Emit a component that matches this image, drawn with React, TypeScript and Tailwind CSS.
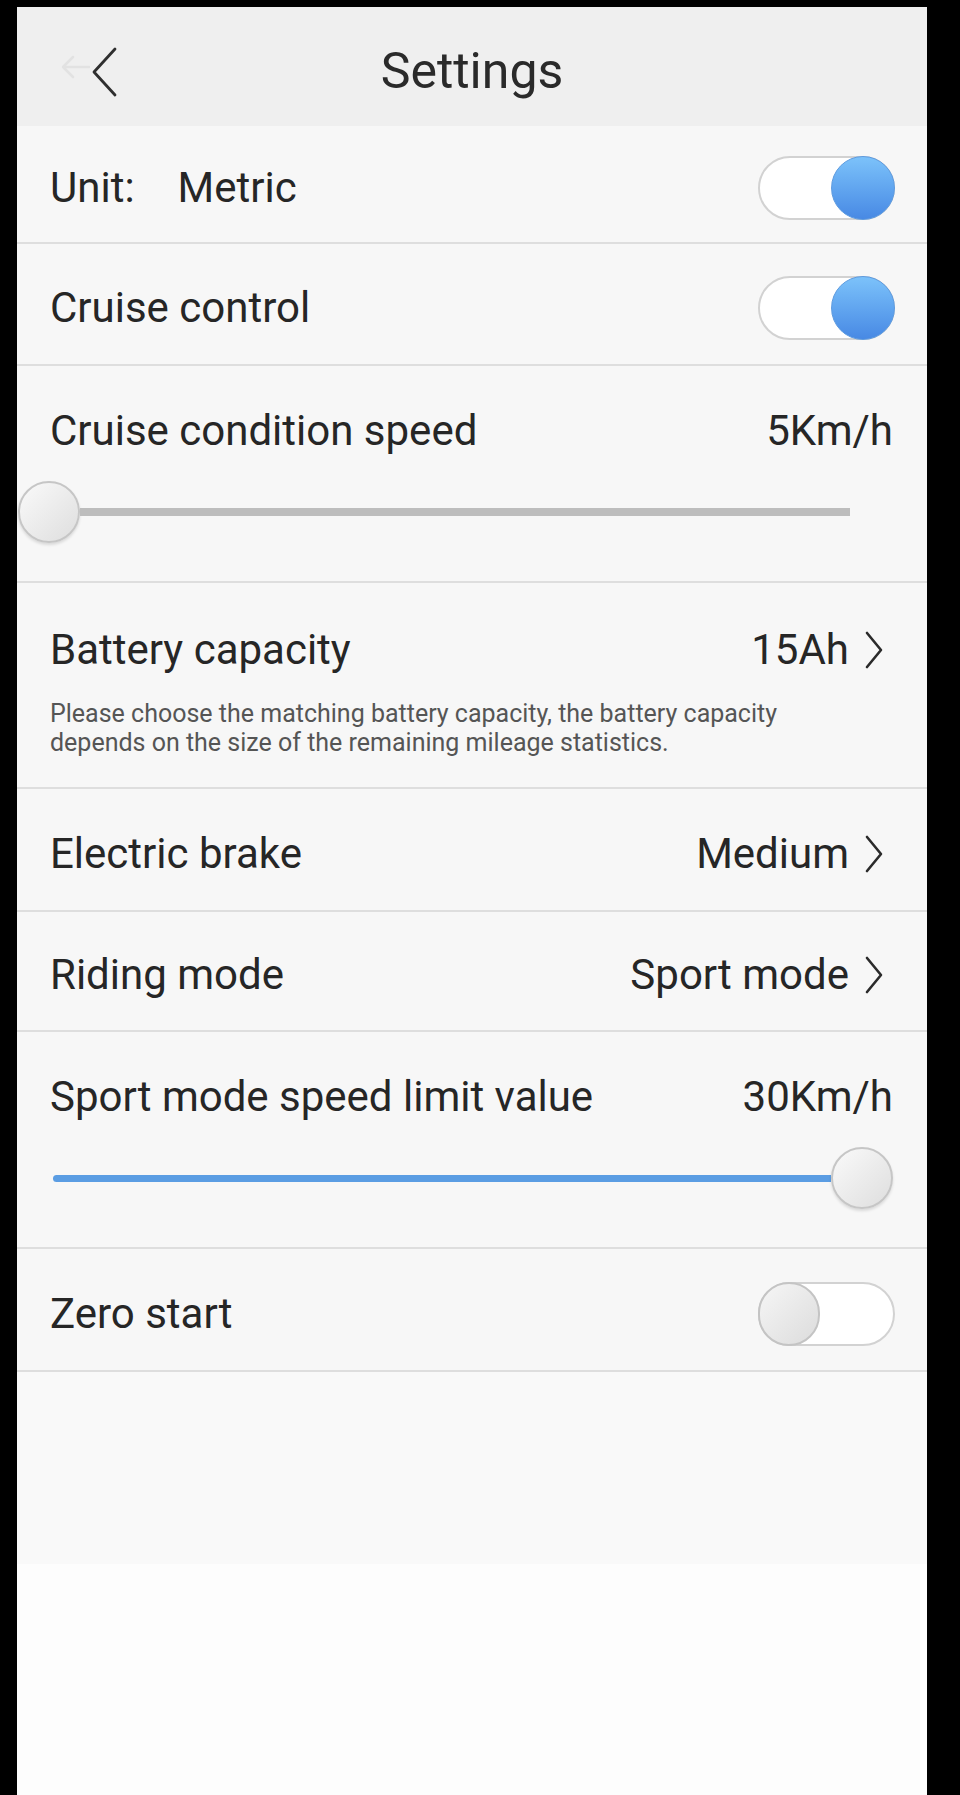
import React from 'react';

const font = { fontFamily: 'Roboto, "Noto Sans", sans-serif' };

function Toggle({ on }: { on: boolean }) {
  return (
    <div className="relative w-[137px] h-[64px] rounded-full border-2 border-[#d2d2d2] bg-white">
      {on ? (
        <div className="absolute right-[-2px] top-[-2px] w-[64px] h-[64px] rounded-full bg-gradient-to-b from-[#7cc2fa] to-[#4889e4] border border-[#5d9be0]" />
      ) : (
        <div className="absolute left-[-2px] top-[-2px] w-[62px] h-[64px] rounded-full bg-gradient-to-br from-[#f6f6f6] to-[#dcdcdc] border-2 border-[#c4c4c4]" />
      )}
    </div>
  );
}

function Chevron() {
  return (
    <svg width="22" height="38" viewBox="0 0 22 38" className="shrink-0">
      <path d="M4 2 L18 19 L4 36" fill="none" stroke="#2b2b2b" strokeWidth="2.6" strokeLinecap="round" strokeLinejoin="round" />
    </svg>
  );
}

function Knob() {
  return (
    <div className="w-[62px] h-[62px] shrink-0 rounded-full bg-gradient-to-br from-[#fafafa] to-[#dedede] border-2 border-[#c6c6c6] shadow-[0_2px_3px_rgba(0,0,0,0.12)]" />
  );
}

function SimpleRow({ label, value, toggle, height }: { label: React.ReactNode; value?: string; toggle?: boolean; height: string }) {
  return (
    <div className={`flex items-center justify-between pl-[33px] pr-[32px] pt-[8px] border-b-2 border-[#dedede] ${height}`}>
      <div className="text-[42px] text-[#262626] leading-[48px]">{label}</div>
      {toggle !== undefined ? (
        <Toggle on={toggle} />
      ) : (
        <div className="flex items-center gap-[14px] pr-[10px]">
          <span className="text-[42px] text-[#262626] leading-[48px]">{value}</span>
          <Chevron />
        </div>
      )}
    </div>
  );
}

export default function App() {
  return (
    <div className="min-h-[1795px] w-[960px] bg-black pt-[7px] pl-[17px]" style={font}>
      <div className="w-[910px] min-h-[1788px] bg-[#fcfcfc] flex flex-col">
        {/* header */}
        <div className="relative h-[119px] bg-[#efefef] flex items-center justify-center pt-[9px]">
          <svg width="60" height="50" viewBox="0 0 60 50" className="absolute left-[42px] top-[40px]">
            <path d="M4 20 L30 20 M4 20 L14 10 M4 20 L14 30" fill="none" stroke="#e2e2e2" strokeWidth="2.5" strokeLinecap="round" />
            <path d="M56 2 L35 25 L56 48" fill="none" stroke="#2f2f2f" strokeWidth="2.8" strokeLinecap="round" strokeLinejoin="round" />
          </svg>
          <div className="text-[50px] text-[#2a2a2a] leading-[58px]">Settings</div>
        </div>

        <div className="bg-[#f7f7f7]">
          <SimpleRow
            height="h-[118px]"
            toggle={true}
            label={
              <span>
                Unit:<span className="ml-[43px]">Metric</span>
              </span>
            }
          />
          <SimpleRow height="h-[122px]" toggle={true} label="Cruise control" />

          {/* cruise speed */}
          <div className="flex flex-col pt-[41px] pb-[38px] border-b-2 border-[#dedede]">
            <div className="flex items-center justify-between pl-[33px] pr-[34px]">
              <span className="text-[42px] text-[#262626] leading-[48px]">Cruise condition speed</span>
              <span className="text-[42px] text-[#262626] leading-[48px]">5Km/h</span>
            </div>
            <div className="flex items-center mt-[26px] pl-[1px] pr-[77px]">
              <Knob />
              <div className="flex-1 h-[8px] bg-[#bdbdbd]" />
            </div>
          </div>

          {/* battery */}
          <div className="flex flex-col pt-[43px] pb-[30px] border-b-2 border-[#dedede]">
            <div className="flex items-center justify-between pl-[33px] pr-[32px]">
              <span className="text-[42px] text-[#262626] leading-[48px]">Battery capacity</span>
              <div className="flex items-center gap-[14px] pr-[10px]">
                <span className="text-[42px] text-[#262626] leading-[48px]">15Ah</span>
                <Chevron />
              </div>
            </div>
            <div className="mt-[25px] pl-[33px] pr-[100px] text-[25px] leading-[29px] text-[#555555]">
              Please choose the matching battery capacity, the battery capacity depends on the size of the remaining mileage statistics.
            </div>
          </div>

          <SimpleRow height="h-[123px]" label="Electric brake" value="Medium" />
          <SimpleRow height="h-[120px]" label="Riding mode" value="Sport mode" />

          {/* sport speed */}
          <div className="flex flex-col pt-[41px] pb-[38px] border-b-2 border-[#dedede]">
            <div className="flex items-center justify-between pl-[33px] pr-[34px]">
              <span className="text-[42px] text-[#262626] leading-[48px]">Sport mode speed limit value</span>
              <span className="text-[42px] text-[#262626] leading-[48px]">30Km/h</span>
            </div>
            <div className="flex items-center mt-[26px] pl-[36px] pr-[34px]">
              <div className="flex-1 h-[7px] bg-[#5b9de3] rounded-l-full" />
              <Knob />
            </div>
          </div>

          <SimpleRow height="h-[123px]" toggle={false} label="Zero start" />
        </div>

        <div className="h-[192px] bg-[#f9f9f9]" />
        <div className="flex-1 bg-[#fdfdfd]" />
      </div>
    </div>
  );
}
